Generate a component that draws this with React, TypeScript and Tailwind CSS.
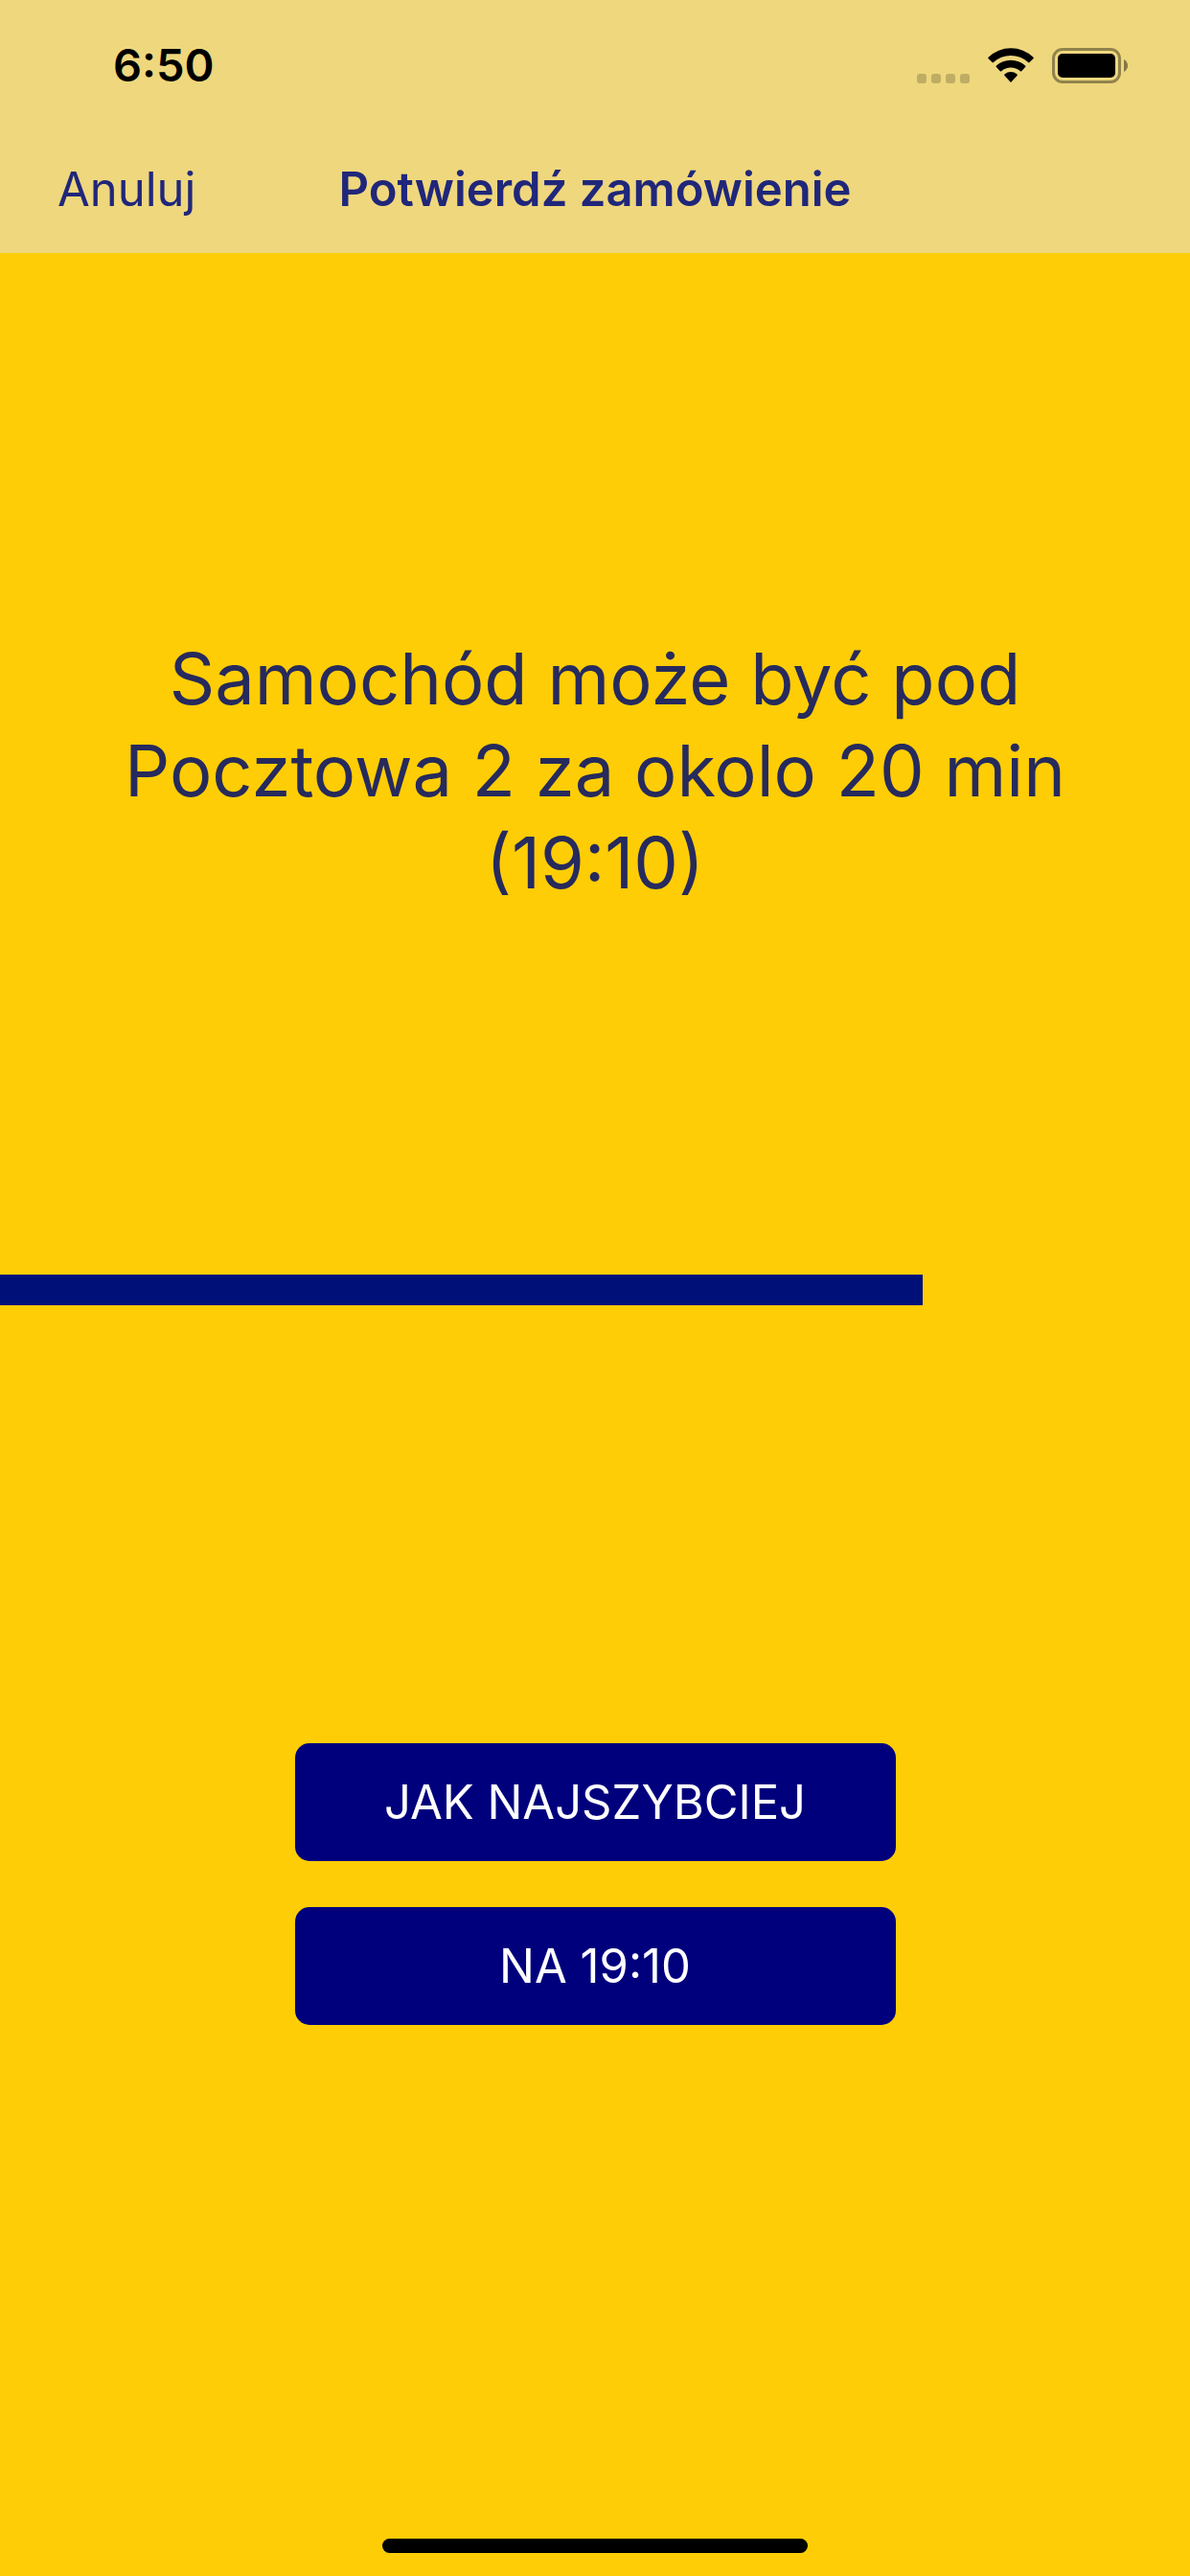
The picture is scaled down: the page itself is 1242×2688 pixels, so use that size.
function SignalDots() {
  return (
    <div className="flex gap-[5px] self-end" aria-hidden="true">
      {[0, 1, 2, 3].map((dot) => (
        <span key={dot} className="size-[10px] rounded-[3px] bg-[#bfad65]" />
      ))}
    </div>
  );
}

function WifiIcon() {
  return (
    <svg width="48" height="36" viewBox="0 0 48 36" role="img" aria-label="Wi-Fi">
      <path d="M24 36l-6.500-7c-.5-.7-.4-1.300.2-1.800a10 10 0 0 1 12.600 0c.6.500.7 1.100.2 1.800z" />
      <path d="M12.800 24.200l-3.900-4.100c-.5-.5-.5-1 0-1.500a22.200 22.200 0 0 1 30.200 0c.5.500.5 1 0 1.500l-3.900 4.100c-.4.4-.9.4-1.400 0a14.800 14.800 0 0 0-19.600 0c-.5.4-1 .4-1.400 0z" />
      <path d="M4.500 15.100L.6 11.200c-.5-.5-.5-1 0-1.500a34 34 0 0 1 46.800 0c.5.500.5 1 0 1.500l-3.900 3.900c-.5.500-.9.500-1.400 0a26.500 26.500 0 0 0-36.200 0c-.5.500-.9.500-1.400 0z" />
    </svg>
  );
}

function BatteryIcon() {
  return (
    <svg width="79" height="37" viewBox="0 0 79 37" role="img" aria-label="Bateria">
      <rect x="1.500" y="1.500" width="69" height="34" rx="9.500" fill="none" stroke="#90834c" strokeWidth="3" />
      <rect x="6" y="6" width="60" height="25" rx="5" />
      <path d="M75 12v13c5.300-2.500 5.300-10.500 0-13z" fill="#837743" />
    </svg>
  );
}

function OrderButton({ label }: { label: string }) {
  return (
    <button
      type="button"
      className="w-full rounded-[15px] bg-[#00007d] px-6 py-[31px] text-[49px] leading-[61px] text-white"
    >
      {label}
    </button>
  );
}

export default function App() {
  return (
    <div className="flex min-h-screen flex-col bg-[#ffcd05] font-[Inter,sans-serif]">
      <header className="bg-[#efd77d] text-[#20277a]">
        <div className="flex h-[132px] items-center justify-between pt-[4px] pr-[65px] pl-[118px] text-black">
          <time className="text-[47px] leading-[60px] font-semibold">6:50</time>
          <div className="flex items-center gap-[19px]">
            <SignalDots />
            <WifiIcon />
            <BatteryIcon />
          </div>
        </div>
        <div className="grid h-[132px] grid-cols-[1fr_auto_1fr] items-center px-[60px]">
          <button type="button" className="justify-self-start text-[49px] leading-[60px]">
            Anuluj
          </button>
          <h1 className="text-[49px] leading-[60px] font-semibold">Potwierdź zamówienie</h1>
        </div>
      </header>

      <main className="flex flex-col items-center">
        <p className="mt-[396px] px-[96px] text-center text-[74px] leading-[96px] text-[#262a5c]">
          Samochód może być pod Pocztowa 2 za okolo 20 min (19:10)
        </p>
        <progress
          value={775}
          max={1000}
          aria-label="Pozostały czas"
          className="mt-[382px] block h-[32px] w-full appearance-none bg-transparent [&::-webkit-progress-bar]:bg-transparent [&::-webkit-progress-value]:bg-[#001079]"
        />
        <div className="mt-[457px] flex w-[627px] max-w-full flex-col gap-[48px]">
          <OrderButton label="JAK NAJSZYBCIEJ" />
          <OrderButton label="NA 19:10" />
        </div>
      </main>

      <footer className="mt-auto flex justify-center pb-[24px]">
        <div className="h-[15px] w-[444px] rounded-full bg-black" />
      </footer>
    </div>
  );
}
